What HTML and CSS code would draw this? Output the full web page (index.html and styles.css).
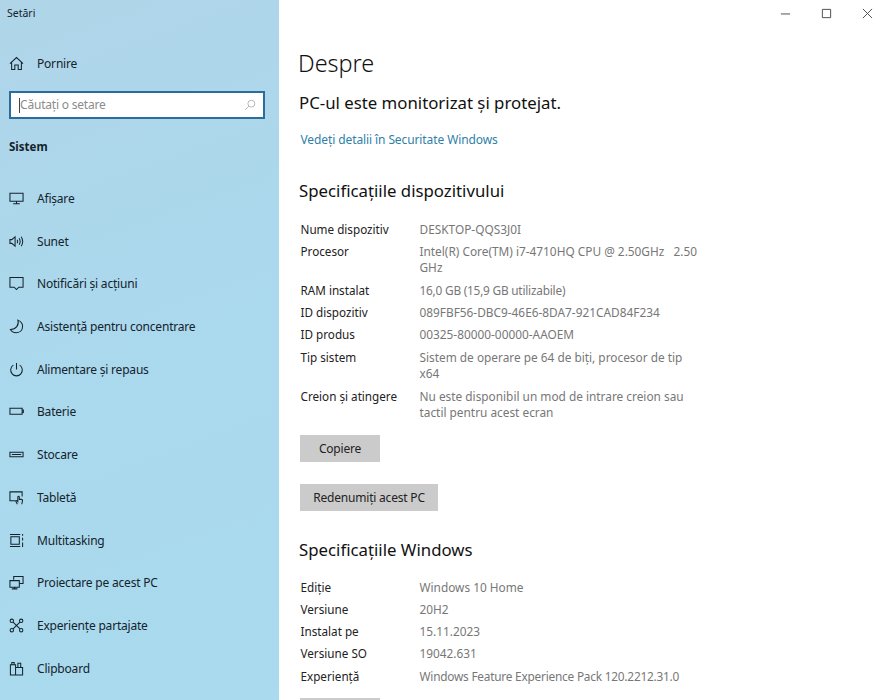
FILE: index.html
```html
<!DOCTYPE html>
<html lang="ro">
<head>
<meta charset="utf-8">
<title>Setări</title>
<link rel="stylesheet" href="styles.css">
</head>
<body>
<div class="window">
  <aside class="sidebar">
    <div class="app-title">Setări</div>
    <a class="nav-item home">
      <svg class="icon" viewBox="0 0 16 16"><path d="M1 8.2 8 1.6l7 6.6M2.8 6.6V14.5H6.2V9.5H9.8V14.5H13.2V6.6"/></svg>
      <span>Pornire</span>
    </a>
    <div class="search">
      <span class="caret"></span>
      <span class="placeholder">Căutați o setare</span>
      <svg class="search-icon" viewBox="0 0 16 16"><circle cx="9.8" cy="6.2" r="4.6"/><path d="M6.4 9.6 1.5 14.5"/></svg>
    </div>
    <div class="section">Sistem</div>
    <nav class="nav">
      <a class="nav-item"><svg class="icon" viewBox="0 0 16 16"><path d="M1 2.5H15V11H1ZM8 11V13.5M4.5 13.5H11.5"/></svg><span>Afișare</span></a>
      <a class="nav-item"><svg class="icon" viewBox="0 0 16 16"><path d="M1 6V10H3L6.5 13V3L3 6ZM8.6 6.2Q9.8 8 8.6 9.8M10.8 4.6Q13 8 10.8 11.4M13 3Q16.2 8 13 13"/></svg><span>Sunet</span></a>
      <a class="nav-item"><svg class="icon" viewBox="0 0 16 16"><path d="M1 1.5H15V12H10.5L8 14.5 5.5 12H1Z"/></svg><span>Notificări și acțiuni</span></a>
      <a class="nav-item"><svg class="icon" viewBox="0 0 16 16"><path d="M9.5 1.2C11 6.5 7.5 11 1.5 11.2 4 15.8 11.5 15.8 14 10.8 15.8 7 13.5 2.5 9.5 1.2Z"/></svg><span>Asistență pentru concentrare</span></a>
      <a class="nav-item"><svg class="icon" viewBox="0 0 16 16"><path d="M8 1V8M4.6 3.4A6.2 6.2 0 1 0 11.4 3.4"/></svg><span>Alimentare și repaus</span></a>
      <a class="nav-item"><svg class="icon" viewBox="0 0 16 16"><path d="M1 4.5H14V11H1ZM14 6.5H15.3V9H14"/></svg><span>Baterie</span></a>
      <a class="nav-item"><svg class="icon" viewBox="0 0 16 16"><path d="M1 5.5H15V10.5H1ZM3 8H13"/></svg><span>Stocare</span></a>
      <a class="nav-item"><svg class="icon" viewBox="0 0 16 16"><path d="M7 11.5H1V2H14V7M9 15.2 7.4 12.4C7 11.4 8 11 8.6 11.6L9.4 12.4V7.6C9.4 6.4 11 6.4 11 7.6V10H13.2C14.2 10 14.6 10.8 14.4 11.6L13.6 15.2"/></svg><span>Tabletă</span></a>
      <a class="nav-item"><svg class="icon" viewBox="0 0 16 16"><path d="M1 1.5H12M1 14.5H12M2 4H11V12H2ZM14.5 1V3M14.5 5V8M14.5 10V15"/></svg><span>Multitasking</span></a>
      <a class="nav-item"><svg class="icon" viewBox="0 0 16 16"><path d="M5 5V1.5H15V9H11M1 6H11V13H1ZM6 13V14.8M3 14.8H9"/></svg><span>Proiectare pe acest PC</span></a>
      <a class="nav-item"><svg class="icon" viewBox="0 0 16 16"><circle cx="3" cy="3" r="1.8"/><circle cx="13" cy="3" r="1.8"/><circle cx="3" cy="13" r="1.8"/><circle cx="13" cy="13" r="1.8"/><path d="M4.3 4.3 11.7 11.7M11.7 4.3 4.3 11.7"/></svg><span>Experiențe partajate</span></a>
      <a class="nav-item"><svg class="icon" viewBox="0 0 16 16"><path d="M1.5 4H7V15H1.5ZM7 7H14.5V15H7ZM3 4V1.5H5.5V4M9.5 7V2.5H12.5V7"/></svg><span>Clipboard</span></a>
    </nav>
  </aside>
  <main class="content">
    <div class="controls">
      <svg class="ctl" viewBox="0 0 12 12"><path d="M1 6.5H11"/></svg>
      <svg class="ctl" viewBox="0 0 12 12"><path d="M1.5 1.5H10.5V10.5H1.5Z"/></svg>
      <svg class="ctl" viewBox="0 0 12 12"><path d="M1 1 11 11M11 1 1 11"/></svg>
    </div>
    <h1>Despre</h1>
    <p class="status">PC-ul este monitorizat și protejat.</p>
    <a class="link">Vedeți detalii în Securitate Windows</a>
    <h2 class="h-device">Specificațiile dispozitivului</h2>
    <dl class="specs">
      <dt>Nume dispozitiv</dt><dd>DESKTOP-QQS3J0I</dd>
      <dt>Procesor</dt><dd>Intel(R) Core(TM) i7-4710HQ CPU @ 2.50GHz &nbsp; 2.50 GHz</dd>
      <dt>RAM instalat</dt><dd class="narrow">16,0 GB (15,9 GB utilizabile)</dd>
      <dt>ID dispozitiv</dt><dd>089FBF56-DBC9-46E6-8DA7-921CAD84F234</dd>
      <dt>ID produs</dt><dd>00325-80000-00000-AAOEM</dd>
      <dt>Tip sistem</dt><dd>Sistem de operare pe 64 de biți, procesor de tip x64</dd>
      <dt>Creion și atingere</dt><dd>Nu este disponibil un mod de intrare creion sau tactil pentru acest ecran</dd>
    </dl>
    <button class="btn btn-copy">Copiere</button>
    <button class="btn btn-rename">Redenumiți acest PC</button>
    <h2 class="h-win">Specificațiile Windows</h2>
    <dl class="specs specs-win">
      <dt>Ediție</dt><dd>Windows 10 Home</dd>
      <dt>Versiune</dt><dd>20H2</dd>
      <dt>Instalat pe</dt><dd>15.11.2023</dd>
      <dt>Versiune SO</dt><dd>19042.631</dd>
      <dt>Experiență</dt><dd class="narrow">Windows Feature Experience Pack 120.2212.31.0</dd>
    </dl>
    <div class="btn btn-copy btn-last"></div>
  </main>
</div>
</body>
</html>
```
FILE: styles.css
```css
* { box-sizing: border-box; }
html, body { margin: 0; height: 700px; overflow: hidden; background: #fff; }
body { font-family: "Noto Sans", "Open Sans", sans-serif; font-size: 12px; color: #1c1c1c; }
.window { display: flex; height: 700px; overflow: hidden; }

.sidebar {
  width: 279px; flex: none; height: 700px; overflow: hidden;
  background: linear-gradient(160deg, #b0d5e9 0%, #abd8ec 40%, #a9daee 100%);
  color: #14232c;
}
.app-title { padding: 6px 0 0 7px; height: 36px; font-size: 10.5px; line-height: 15px; }
.nav-item { display: flex; align-items: center; height: 42.73px; padding-left: 9px; font-size: 12px; letter-spacing: -0.2px; }
.nav-item span { margin-left: 13px; }
.home { height: 42px; margin-top: 6px; }
.icon { width: 15px; height: 15px; flex: none; fill: none; stroke: #14232c; stroke-width: 1.1; }

.search {
  display: flex; align-items: center; margin: 7px 14px 0 9px; height: 28px;
  background: #fff; border: 2px solid #2a6d9a; padding: 0 8px;
}
.caret { width: 1px; height: 15px; background: #444; flex: none; }
.placeholder { color: #8c8c8c; font-size: 12px; letter-spacing: -0.2px; flex: 1; margin-top: -2px; }
.search-icon { width: 12px; height: 12px; fill: none; stroke: #a9a9a9; stroke-width: 1.1; flex: none; margin-right: -1px; }
.section { padding-left: 9px; margin-top: 19px; font-weight: 700; font-size: 11.5px; line-height: 18px; height: 30px; color: #14232c; }
.nav { margin-top: 9px; }

.content { flex: 1; min-width: 0; padding-left: 20px; height: 700px; overflow: hidden; }
.controls { display: flex; justify-content: flex-end; gap: 30px; padding: 8px 9px 0 0; height: 46px; }
.ctl { width: 11px; height: 11px; fill: none; stroke: #444; stroke-width: 1; }
h1 { margin: 0 0 0 -1px; font-weight: 300; font-size: 23.4px; line-height: 34px; color: #111; }
.status { margin: 11px 0 0; font-size: 16.8px; line-height: 24px; color: #111; }
.link { display: block; margin: 16px 0 0 1.5px; color: #2f7fa8; font-size: 12px; letter-spacing: -0.1px; line-height: 18px; }
h2 { margin: 0; font-weight: 400; font-size: 16.8px; line-height: 24px; color: #111; }
.h-device { margin-top: 30px; }
.specs { display: grid; grid-template-columns: 119px 280px; row-gap: 6.13px; margin: 17.5px 0 0 1.5px; line-height: 16.3px; font-size: 11.85px; }
.specs-win { row-gap: 5.95px; margin-top: 16.5px; }
dt { color: #222; font-size: 11.7px; }
dd { margin: 0; color: #777; }
.narrow { letter-spacing: -0.22px; }
.btn { display: block; margin-left: 1px; padding: 0; border: 0; background: #cbcbcb; color: #222; font: inherit; font-size: 12px; letter-spacing: -0.2px; }
.btn-copy { width: 80px; height: 27px; margin-top: 15px; }
.btn-rename { width: 138px; height: 27px; margin-top: 22px; }
.h-win { margin-top: 27px; }
.btn-last { margin-top: 14px; }
```
